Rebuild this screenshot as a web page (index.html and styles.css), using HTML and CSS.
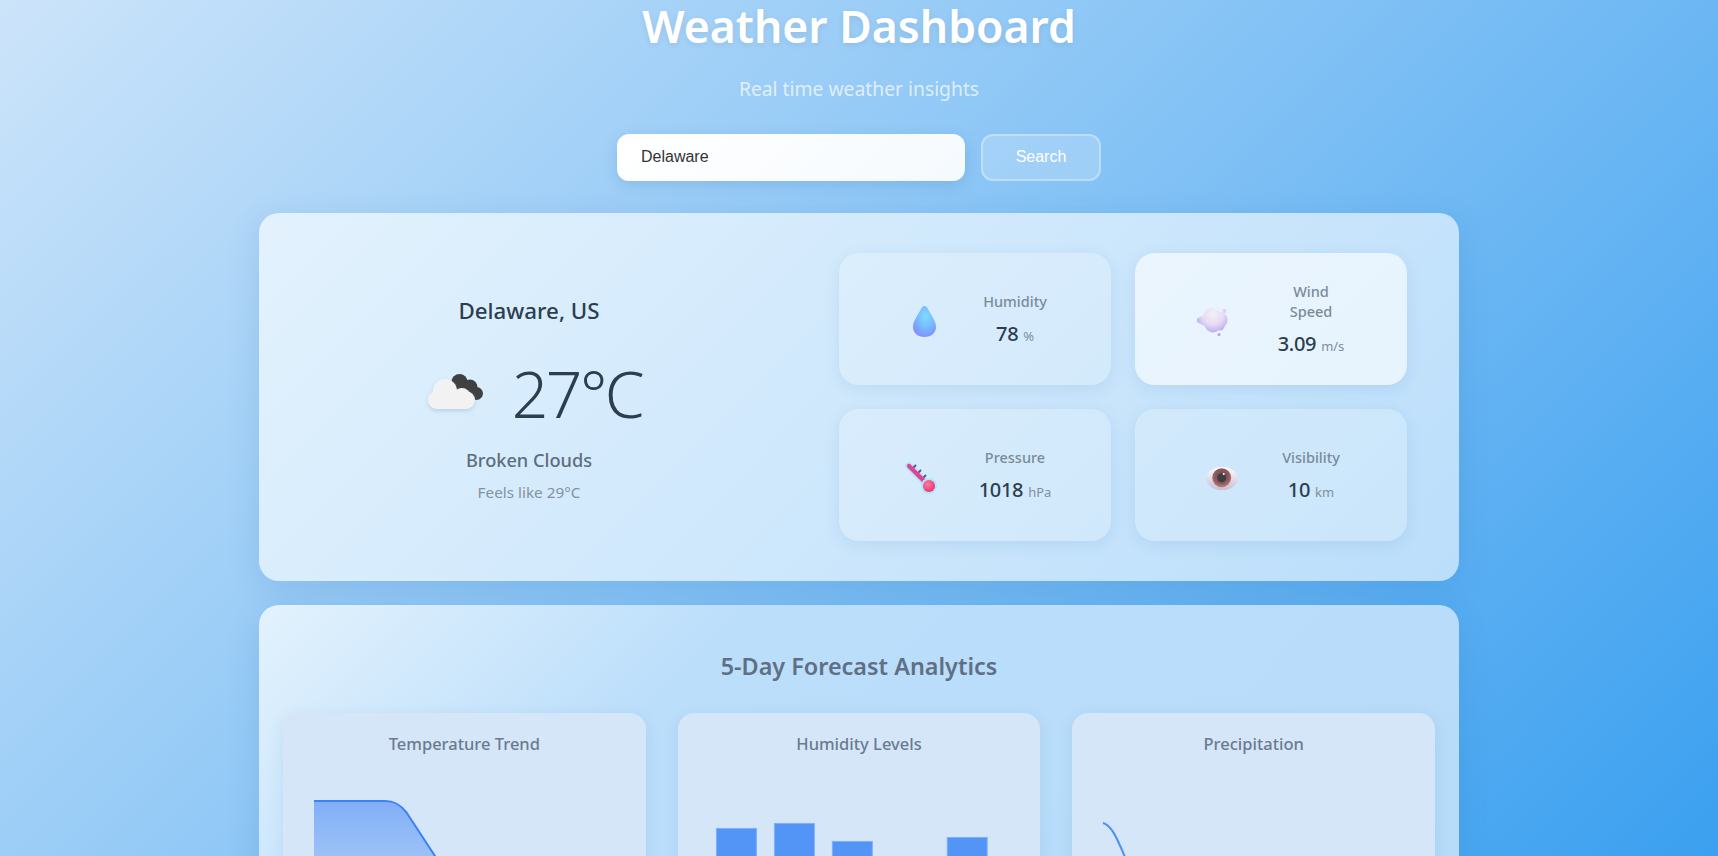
FILE: index.html
```html
<!DOCTYPE html>
<html lang="en">

<head>
    <meta charset="UTF-8">
    <meta name="viewport" content="width=device-width, initial-scale=1.0">
    <title>Weather Dashboard</title>

    <link rel="stylesheet" href="styles.css">

</head>

<body>

    <header class="header">
        <h1>Weather Dashboard</h1>
        <p class="subtitle">Real time weather insights</p>
    </header>

    <div class="search">
        <input class="search-input" type="text" value="Delaware">
        <button class="search-btn">Search</button>
    </div>

    <main class="dashboard">

        <section class="panel current">
            <div class="summary">
                <h2 class="city">Delaware, US</h2>
                <div class="temp-row">
                    <svg class="temp-icon" viewBox="0 0 72 60">
                        <defs>
                            <filter id="soft" x="-20%" y="-20%" width="140%" height="150%">
                                <feDropShadow dx="0" dy="2" stdDeviation="2" flood-color="#7a9cc0" flood-opacity="0.35" />
                            </filter>
                        </defs>
                        <g fill="#404040">
                            <circle cx="35.500" cy="18" r="8" />
                            <circle cx="46" cy="23" r="7.500" />
                            <circle cx="52.500" cy="29.500" r="6.500" />
                            <rect x="34" y="20" width="16" height="15" />
                        </g>
                        <g fill="#f2f2f2" filter="url(#soft)">
                            <circle cx="21" cy="27" r="12" />
                            <circle cx="38" cy="32" r="8" />
                            <rect x="4" y="27" width="47" height="18" rx="9" />
                        </g>
                    </svg>
                    <span class="temp">27°C</span>
                </div>
                <p class="condition">Broken Clouds</p>
                <p class="feels">Feels like 29°C</p>
            </div>

            <div class="stats">
                <div class="stat">
                    <svg class="stat-icon" viewBox="0 0 40 40">
                        <defs>
                            <radialGradient id="drop" cx="0.55" cy="0.35" r="0.75">
                                <stop offset="0" stop-color="#80dcff" />
                                <stop offset="0.55" stop-color="#76b4ff" />
                                <stop offset="1" stop-color="#8a80ff" />
                            </radialGradient>
                        </defs>
                        <path fill="url(#drop)" d="M21.500 7C23 7 24 8 25 10 28 16 33 22 33 28 33 34 28 38 21.500 38 15 38 10 34 10 28 10 22 15 16 18 10 19 8 20 7 21.500 7Z" />
                    </svg>
                    <div class="stat-info">
                        <div class="stat-label">Humidity</div>
                        <div class="stat-value">78 <span class="unit">%</span></div>
                    </div>
                </div>

                <div class="stat stat-hover">
                    <svg class="stat-icon" viewBox="0 0 40 40">
                        <defs>
                            <radialGradient id="wind" gradientUnits="userSpaceOnUse" cx="14" cy="15" r="21">
                                <stop offset="0" stop-color="#f4eff8" />
                                <stop offset="0.5" stop-color="#e6dcf3" />
                                <stop offset="1" stop-color="#b39df0" />
                            </radialGradient>
                        </defs>
                        <g fill="url(#wind)">
                            <path d="M-2 19.500 9 14V29L-2 23Z" />
                            <circle cx="13" cy="18" r="9" />
                            <circle cx="20" cy="21" r="8.500" />
                            <circle cx="14" cy="25" r="8.500" />
                            <circle cx="21" cy="27" r="4.500" />
                            <circle cx="25" cy="12" r="2.300" />
                            <circle cx="19" cy="9" r="1" />
                            <circle cx="20" cy="35.500" r="1.500" />
                        </g>
                    </svg>
                    <div class="stat-info">
                        <div class="stat-label stat-label-wrap">Wind Speed</div>
                        <div class="stat-value">3.09 <span class="unit">m/s</span></div>
                    </div>
                </div>

                <div class="stat">
                    <svg class="stat-icon" viewBox="0 0 40 40">
                        <defs>
                            <radialGradient id="bulb" cx="0.4" cy="0.35" r="0.7">
                                <stop offset="0" stop-color="#ff7d9c" />
                                <stop offset="1" stop-color="#e8306e" />
                            </radialGradient>
                        </defs>
                        <g stroke-linecap="round" fill="none">
                            <path stroke="#b5e3ff" stroke-width="7.500" d="M6 11 26 31" />
                            <path stroke="#5b4a8c" stroke-width="1.800" d="M11 12 12.500 10.500M16 17 17.500 15.500M21 22 22.500 20.500" />
                            <path stroke="#dd438f" stroke-width="4.200" d="M6 11 26 31" />
                        </g>
                        <circle cx="26" cy="31" r="8" fill="#b5e3ff" />
                        <circle cx="26" cy="31" r="6" fill="url(#bulb)" />
                    </svg>
                    <div class="stat-info">
                        <div class="stat-label">Pressure</div>
                        <div class="stat-value">1018 <span class="unit">hPa</span></div>
                    </div>
                </div>

                <div class="stat">
                    <svg class="stat-icon" viewBox="0 0 40 40">
                        <defs>
                            <linearGradient id="sclera" x1="0" y1="0" x2="0" y2="1">
                                <stop offset="0" stop-color="#fbfbfd" />
                                <stop offset="1" stop-color="#c9bfd8" />
                            </linearGradient>
                            <radialGradient id="iris" cx="0.5" cy="0.42" r="0.6">
                                <stop offset="0" stop-color="#6e4548" />
                                <stop offset="0.65" stop-color="#8f5a5c" />
                                <stop offset="1" stop-color="#bc8878" />
                            </radialGradient>
                        </defs>
                        <ellipse cx="23" cy="23.500" rx="16" ry="11.500" fill="url(#sclera)" />
                        <circle cx="22.700" cy="22.700" r="9.500" fill="url(#iris)" />
                        <circle cx="22.700" cy="22.700" r="4.500" fill="#3d3d42" />
                        <circle cx="24.700" cy="19" r="1" fill="#ffffff" />
                    </svg>
                    <div class="stat-info">
                        <div class="stat-label">Visibility</div>
                        <div class="stat-value">10 <span class="unit">km</span></div>
                    </div>
                </div>
            </div>
        </section>

        <section class="panel forecast">
            <h2 class="forecast-title">5-Day Forecast Analytics</h2>
            <div class="charts">
                <div class="chart-card">
                    <h3 class="chart-title">Temperature Trend</h3>
                    <svg class="chart" viewBox="0 0 331 200">
                        <defs>
                            <linearGradient id="area" x1="0" y1="0" x2="0" y2="1">
                                <stop offset="0" stop-color="#3b82f6" stop-opacity="0.55" />
                                <stop offset="1" stop-color="#3b82f6" stop-opacity="0.05" />
                            </linearGradient>
                        </defs>
                        <path fill="url(#area)" d="M15 32H86C96 32 102 36 108 44L200 185H15Z" />
                        <path fill="none" stroke="#3b82f6" stroke-width="2" d="M15 32H86C96 32 102 36 108 44L200 185" />
                    </svg>
                </div>
                <div class="chart-card">
                    <h3 class="chart-title">Humidity Levels</h3>
                    <svg class="chart" viewBox="0 0 331 200">
                        <g fill="#5394f7" stroke="#7fb0f9">
                            <rect x="22.500" y="59.500" width="40" height="140" />
                            <rect x="80.500" y="54.500" width="40" height="145" />
                            <rect x="138.500" y="72.500" width="40" height="127" />
                            <rect x="196.500" y="110.500" width="40" height="89" />
                            <rect x="253.500" y="68.500" width="40" height="131" />
                        </g>
                    </svg>
                </div>
                <div class="chart-card">
                    <h3 class="chart-title">Precipitation</h3>
                    <svg class="chart" viewBox="0 0 331 200">
                        <path fill="none" stroke="#4d90f5" stroke-width="2" d="M15 54C24 56 30 72 37 88S50 120 60 140" />
                    </svg>
                </div>
            </div>
        </section>

    </main>

</body>

</html>
```

FILE: styles.css
```css
html,
body {
    height: 100%;
}

body {
    margin: 0;
    overflow: hidden;
    font-family: "Noto Sans", "Open Sans", sans-serif;
    background: linear-gradient(135deg, #cce4fa 0%, #90c8f6 42%, #3ba0f0 100%);
}

.header {
    text-align: center;
}

.header h1 {
    margin: 0;
    font-size: 44.500px;
    line-height: 52px;
    font-weight: 600;
    color: #ffffff;
    text-shadow: 0 2px 6px rgba(0, 0, 0, 0.08);
}

.subtitle {
    margin: 23px 0 0;
    font-size: 19.300px;
    line-height: 28px;
    color: rgba(255, 255, 255, 0.7);
}

.search {
    display: flex;
    justify-content: center;
    gap: 16px;
    margin-top: 31px;
}

.search-input {
    width: 348px;
    height: 47px;
    box-sizing: border-box;
    padding: 0 24px 2px;
    border: none;
    border-radius: 12px;
    background: linear-gradient(135deg, #ffffff, #f5fafe);
    box-shadow: 0 4px 14px rgba(40, 100, 160, 0.18);
    font-family: "Liberation Sans", Arial, sans-serif;
    font-size: 16px;
    color: #333333;
}

.search-btn {
    width: 120px;
    height: 47px;
    padding: 0 0 2px;
    border: 2px solid rgba(255, 255, 255, 0.3);
    border-radius: 12px;
    background: rgba(255, 255, 255, 0.2);
    font-family: "Liberation Sans", Arial, sans-serif;
    font-size: 16px;
    color: #ffffff;
}

.dashboard {
    width: 1200px;
    margin: 32px auto 0;
    display: flex;
    flex-direction: column;
    gap: 24px;
}

.panel {
    border-radius: 20px;
    background: linear-gradient(135deg, #e3f2fd, #bbdefb);
    box-shadow: 0 8px 32px rgba(31, 100, 170, 0.16);
}

.current {
    display: grid;
    grid-template-columns: 460px 568px;
    gap: 80px;
    padding: 40px 52px 40px 40px;
}

.summary {
    display: flex;
    flex-direction: column;
    align-items: center;
    justify-content: center;
    padding-top: 5px;
}

.city {
    margin: 0;
    font-size: 22.300px;
    line-height: 30px;
    font-weight: 500;
    color: #2c3e50;
}

.temp-row {
    display: flex;
    align-items: center;
    gap: 16px;
    margin-top: 28px;
    padding-left: 8px;
}

.temp-icon {
    width: 72px;
    height: 60px;
}

.temp {
    font-size: 64px;
    line-height: 80px;
    letter-spacing: -2.500px;
    font-weight: 300;
    color: #2c3e50;
}

.condition {
    margin: 14px 0 0;
    font-size: 18.200px;
    line-height: 24px;
    font-weight: 500;
    color: #5d6d7e;
}

.feels {
    margin: 9px 0 0;
    font-size: 15.300px;
    line-height: 22px;
    color: #85929e;
}

.stats {
    display: grid;
    grid-template-columns: 272px 272px;
    grid-auto-rows: 132px;
    gap: 24px;
}

.stat {
    display: flex;
    align-items: center;
    padding: 0 24px 0 64px;
    border-radius: 20px;
    background: rgba(255, 255, 255, 0.2);
    box-shadow: 0 4px 16px rgba(31, 100, 170, 0.1);
}

.stat-hover {
    background: rgba(255, 255, 255, 0.6);
}

.stat-icon {
    flex: none;
    width: 40px;
    height: 40px;
    overflow: visible;
}

.stat-info {
    flex: 1;
    padding-top: 3px;
    text-align: center;
}

.stat-label {
    font-size: 14.500px;
    line-height: 20px;
    font-weight: 500;
    color: #7a8b99;
}

.stat-label-wrap {
    width: 60px;
    margin: 0 auto;
}

.stat-value {
    margin-top: 9px;
    font-size: 20px;
    line-height: 28px;
    letter-spacing: -0.3px;
    font-weight: 500;
    color: #2c3e50;
}

.unit {
    font-size: 13px;
    letter-spacing: 0;
    font-weight: 400;
    color: #7f8fa0;
}

.forecast {
    padding: 24px;
    height: 400px;
    background: linear-gradient(135deg, #e3f2fd 0%, #bbdefb 30%, #b6dbf9 100%);
}

.forecast-title {
    margin: 18.500px 0 0;
    text-align: center;
    font-size: 23.400px;
    line-height: 36px;
    font-weight: 600;
    color: #5f7085;
}

.charts {
    display: grid;
    grid-template-columns: repeat(3, 1fr);
    gap: 32px;
    margin-top: 29.500px;
}

.chart-card {
    padding: 16px;
    border-radius: 16px;
    background: #d5e6f8;
    box-shadow: 0 4px 16px rgba(31, 100, 170, 0.1);
}

.chart-title {
    margin: 0;
    text-align: center;
    font-size: 16.500px;
    line-height: 30px;
    font-weight: 500;
    color: #6b7a90;
}

.chart {
    display: block;
    width: 100%;
    margin-top: 10px;
}
```
